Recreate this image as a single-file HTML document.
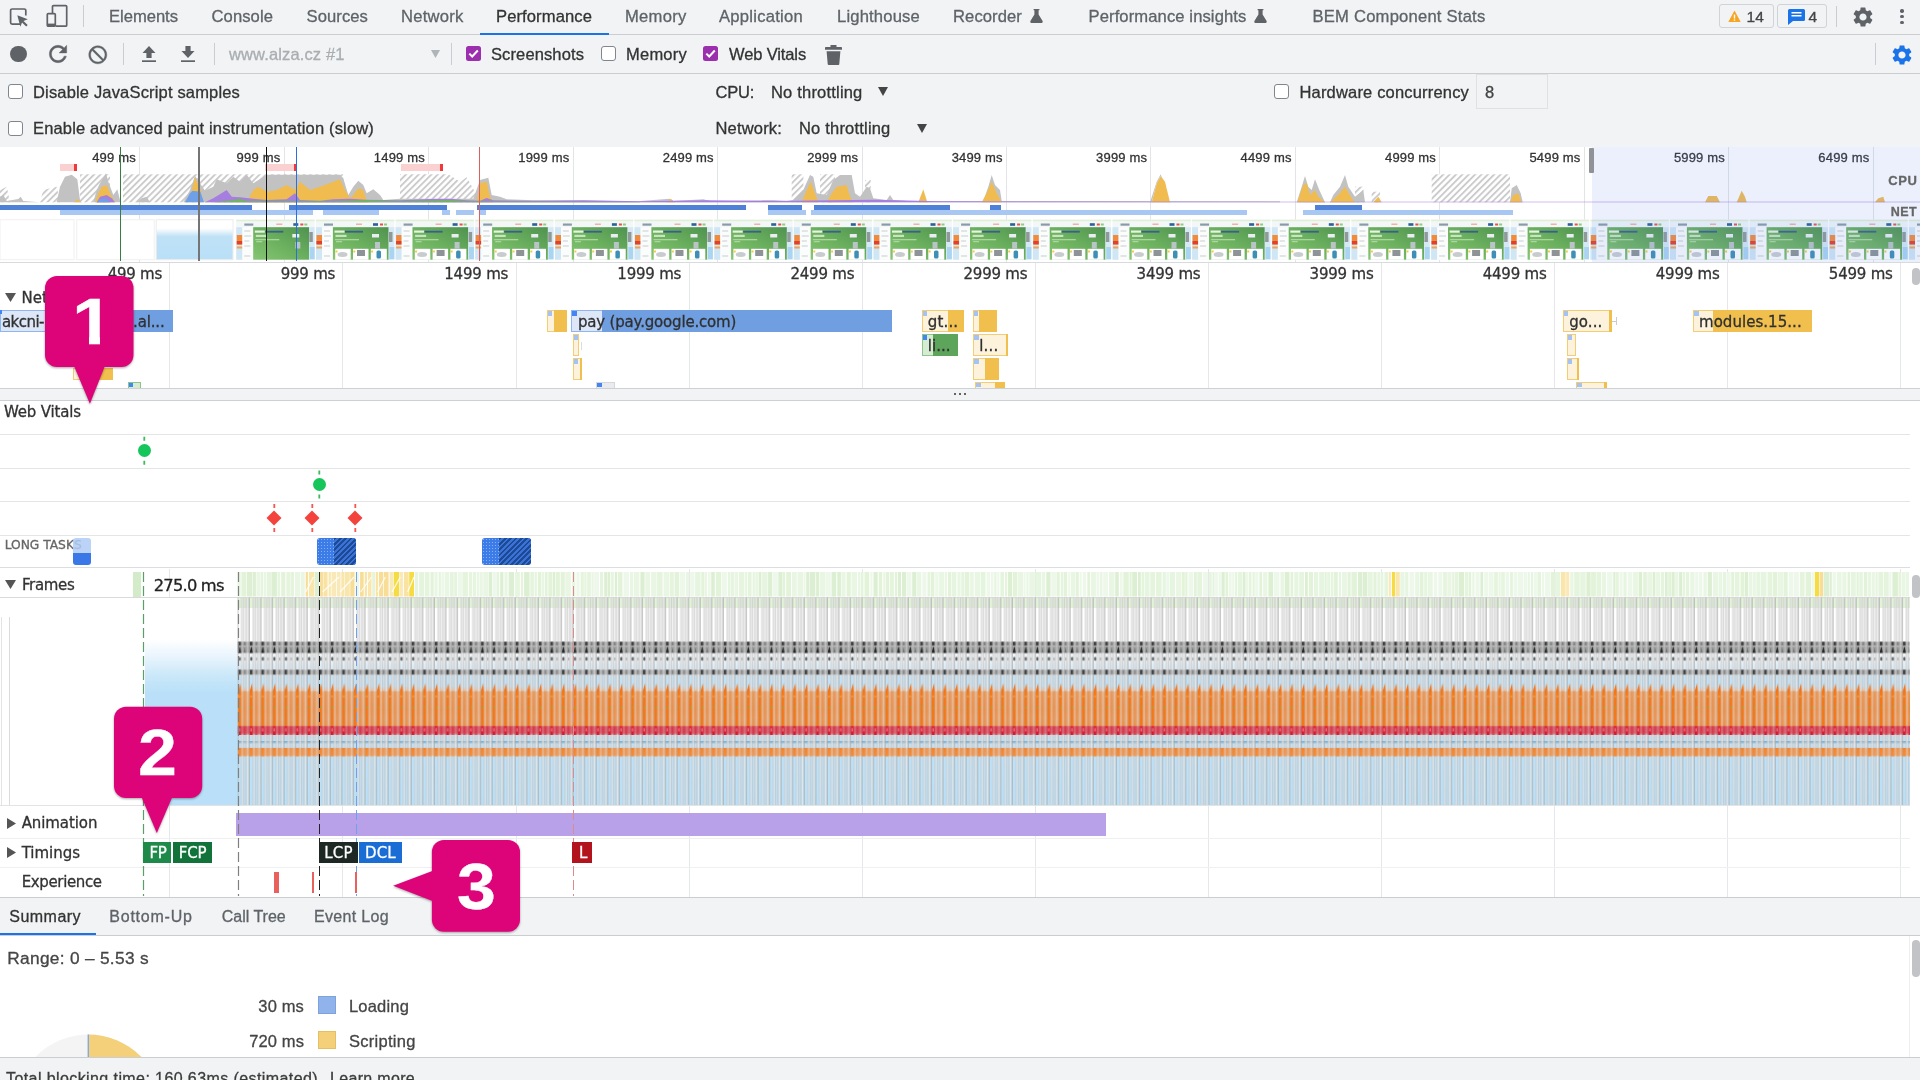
<!DOCTYPE html>
<html lang="en"><head><meta charset="utf-8"><title>DevTools Performance</title>
<style>
html,body{margin:0;padding:0}
body{width:1920px;height:1080px;position:relative;overflow:hidden;background:#fff;font-family:"Liberation Sans",sans-serif;}
.a{position:absolute;box-sizing:border-box}
.t{position:absolute;white-space:nowrap;display:block;-webkit-text-stroke:.3px}
svg{position:absolute;overflow:visible}
#w{position:absolute;left:0;top:0;width:1920px;height:1080px;will-change:transform}
</style></head><body><div id="w">

<div class="a" style="left:0.00px;top:0.00px;width:1920.00px;height:34.50px;background:#f1f3f4;"></div>
<div class="a" style="left:0.00px;top:34.00px;width:1920.00px;height:1.00px;background:#cbcdd1;"></div>
<svg style="left:9px;top:7px" width="20" height="20" viewBox="0 0 20 20"><path d="M11 17.2H3.2a1.6 1.6 0 0 1-1.6-1.6V3.6A1.6 1.6 0 0 1 3.2 2h12a1.6 1.6 0 0 1 1.6 1.6v5" fill="none" stroke="#5f6368" stroke-width="1.7"/><path d="M8.3 8.3l10.5 4-4.3 1.6 4.2 4.2-1.5 1.5-4.2-4.2-1.6 4.3z" fill="#5f6368"/></svg>
<svg style="left:46px;top:4px" width="23" height="24" viewBox="0 0 23 24"><path d="M6.5 9V2.6a1 1 0 0 1 1-1h12.2a1 1 0 0 1 1 1v18.6a1 1 0 0 1-1 1H10" fill="none" stroke="#5f6368" stroke-width="1.7"/><rect x="1.3" y="9.6" width="8" height="12.6" rx="1" fill="none" stroke="#5f6368" stroke-width="1.7"/><rect x="1.3" y="19.6" width="8" height="2.6" fill="#5f6368"/></svg>
<div class="a" style="left:83.00px;top:5.00px;width:1.00px;height:22.00px;background:#cbcdd1;"></div>
<span class="t" style="left:109.00px;top:8.80px;font-size:16.6px;line-height:16.6px;color:#5f6368;letter-spacing:-0.025px;">Elements</span>
<span class="t" style="left:211.50px;top:8.80px;font-size:16.6px;line-height:16.6px;color:#5f6368;letter-spacing:0.085px;">Console</span>
<span class="t" style="left:306.50px;top:8.80px;font-size:16.6px;line-height:16.6px;color:#5f6368;letter-spacing:0.086px;">Sources</span>
<span class="t" style="left:401.00px;top:8.80px;font-size:16.6px;line-height:16.6px;color:#5f6368;letter-spacing:0.231px;">Network</span>
<span class="t" style="left:496.00px;top:8.80px;font-size:16.6px;line-height:16.6px;color:#333;letter-spacing:0.088px;">Performance</span>
<span class="t" style="left:625.00px;top:8.80px;font-size:16.6px;line-height:16.6px;color:#5f6368;letter-spacing:0.258px;">Memory</span>
<span class="t" style="left:719.00px;top:8.80px;font-size:16.6px;line-height:16.6px;color:#5f6368;letter-spacing:0.253px;">Application</span>
<span class="t" style="left:837.00px;top:8.80px;font-size:16.6px;line-height:16.6px;color:#5f6368;letter-spacing:0.177px;">Lighthouse</span>
<span class="t" style="left:953.00px;top:8.80px;font-size:16.6px;line-height:16.6px;color:#5f6368;letter-spacing:0.091px;">Recorder</span>
<span class="t" style="left:1088.50px;top:8.80px;font-size:16.6px;line-height:16.6px;color:#5f6368;letter-spacing:0.104px;">Performance insights</span>
<span class="t" style="left:1312.50px;top:8.80px;font-size:16.6px;line-height:16.6px;color:#5f6368;letter-spacing:0.218px;">BEM Component Stats</span>
<div class="a" style="left:480.00px;top:33.30px;width:128.50px;height:1.70px;background:#1a73e8;"></div>
<svg style="left:1030px;top:9px" width="13" height="14" viewBox="0 0 13 14"><path d="M3.6 0h5.8v1.3H8.6v4.2l4 6.6c.4.8 0 1.9-1 1.9H1.400c-1 0-1.400-1.100-1-1.900l4-6.600V1.300H3.600z" fill="#5f6368"/></svg>
<svg style="left:1254px;top:9px" width="13" height="14" viewBox="0 0 13 14"><path d="M3.6 0h5.8v1.3H8.6v4.2l4 6.6c.4.8 0 1.9-1 1.9H1.400c-1 0-1.400-1.100-1-1.900l4-6.600V1.300H3.600z" fill="#5f6368"/></svg>
<div class="a" style="left:1719.00px;top:3.60px;width:55.00px;height:24.60px;background:#f1f3f4;border:1px solid #d0d3d7;border-radius:3px"></div>
<svg style="left:1728px;top:9.5px" width="13" height="13" viewBox="0 0 13 13"><path d="M6.500.6L12.700 12H.3z" fill="#f5a623"/><rect x="5.800" y="4.600" width="1.400" height="4" fill="#fff"/><rect x="5.800" y="9.400" width="1.400" height="1.400" fill="#fff"/></svg>
<span class="t" style="left:1746.50px;top:8.80px;font-size:15.5px;line-height:15.5px;color:#444;letter-spacing:0.129px;">14</span>
<div class="a" style="left:1777.00px;top:3.60px;width:50.00px;height:24.60px;background:#f1f3f4;border:1px solid #d0d3d7;border-radius:3px"></div>
<svg style="left:1787.500px;top:8.500px" width="17" height="16" viewBox="0 0 17 16"><path d="M1.500 0h14A1.500 1.500 0 0 1 17 1.500v9a1.500 1.500 0 0 1-1.500 1.500H5l-5 4V1.500A1.500 1.500 0 0 1 1.500 0z" fill="#1a73e8"/><rect x="3.500" y="3" width="10" height="1.500" fill="#fff"/><rect x="3.500" y="6" width="10" height="1.500" fill="#fff"/></svg>
<span class="t" style="left:1808.50px;top:8.80px;font-size:15.5px;line-height:15.5px;color:#444;letter-spacing:-0.121px;">4</span>
<div class="a" style="left:1836.00px;top:6.00px;width:1.00px;height:21.00px;background:#cbcdd1;"></div>
<svg style="left:1850.500px;top:4.500px" width="24" height="24" viewBox="0 0 24 24"><path d="M19.140 12.940c.040-.300.060-.610.060-.940 0-.320-.020-.640-.070-.940l2.030-1.580a.490.490 0 0 0 .120-.610l-1.920-3.320a.488.488 0 0 0-.590-.220l-2.390.960c-.500-.380-1.030-.700-1.620-.940l-.360-2.540a.484.484 0 0 0-.480-.410h-3.840c-.240 0-.430.170-.470.410l-.360 2.540c-.590.240-1.130.570-1.620.940l-2.390-.960c-.220-.080-.470 0-.590.220L2.740 8.870c-.120.210-.080.470.120.610l2.030 1.580c-.050.300-.090.630-.090.940s.020.640.070.940l-2.030 1.580a.490.490 0 0 0-.120.610l1.920 3.320c.120.220.370.290.590.220l2.390-.960c.500.380 1.030.700 1.620.940l.360 2.540c.050.240.240.410.480.410h3.840c.240 0 .440-.170.470-.410l.360-2.540c.590-.240 1.130-.560 1.620-.940l2.390.960c.220.080.470 0 .590-.220l1.920-3.320c.120-.220.070-.470-.120-.610l-2.010-1.580zM12 15.600c-1.980 0-3.600-1.620-3.600-3.600s1.620-3.600 3.600-3.600 3.600 1.620 3.600 3.600-1.620 3.600-3.600 3.600z" fill="#5f6368"/></svg>
<div class="a" style="left:1900.30px;top:9.30px;width:3.40px;height:3.40px;background:#5f6368;border-radius:50%"></div>
<div class="a" style="left:1900.30px;top:15.00px;width:3.40px;height:3.40px;background:#5f6368;border-radius:50%"></div>
<div class="a" style="left:1900.30px;top:20.70px;width:3.40px;height:3.40px;background:#5f6368;border-radius:50%"></div>
<div class="a" style="left:0.00px;top:35.00px;width:1920.00px;height:38.00px;background:#f1f3f4;"></div>
<div class="a" style="left:0.00px;top:73.00px;width:1920.00px;height:1.00px;background:#cbcdd1;"></div>
<div class="a" style="left:10.00px;top:45.70px;width:16.60px;height:16.60px;background:#5f6368;border-radius:50%"></div>
<svg style="left:44.500px;top:41.300px" width="26" height="26" viewBox="0 0 24 24"><path d="M17.650 6.350C16.200 4.900 14.210 4 12 4c-4.420 0-7.990 3.580-7.990 8s3.570 8 7.990 8c3.730 0 6.840-2.550 7.730-6h-2.080c-.820 2.330-3.040 4-5.650 4-3.310 0-6-2.690-6-6s2.690-6 6-6c1.660 0 3.140.690 4.220 1.780L13 11h7V4l-2.350 2.350z" fill="#5f6368" stroke="#5f6368" stroke-width=".4"/></svg>
<svg style="left:87.200px;top:43.700px" width="21.600" height="21.600" viewBox="0 0 24 24"><path transform="scale(-1,1) translate(-24,0)" d="M12 2C6.480 2 2 6.480 2 12s4.480 10 10 10 10-4.480 10-10S17.520 2 12 2zM4 12c0-4.420 3.580-8 8-8 1.850 0 3.550.630 4.900 1.690L5.690 16.900C4.630 15.550 4 13.850 4 12zm8 8c-1.850 0-3.550-.630-4.900-1.690L18.310 7.100C19.370 8.450 20 10.150 20 12c0 4.420-3.580 8-8 8z" fill="#5f6368" stroke="#5f6368" stroke-width=".5"/></svg>
<div class="a" style="left:123.00px;top:43.00px;width:1.00px;height:22.00px;background:#cbcdd1;"></div>
<svg style="left:142px;top:46px" width="14" height="16" viewBox="0 0 14 16"><path d="M7 0l6.500 7H9.600v5H4.400V7H.5z" fill="#5f6368"/><rect x="0" y="14.300" width="14" height="1.700" fill="#5f6368"/></svg>
<svg style="left:181px;top:46px" width="14" height="16" viewBox="0 0 14 16"><path d="M7 12L.5 5h3.900V0h5.200v5h3.900z" fill="#5f6368"/><rect x="0" y="14.300" width="14" height="1.700" fill="#5f6368"/></svg>
<div class="a" style="left:213.50px;top:43.00px;width:1.00px;height:22.00px;background:#cbcdd1;"></div>
<span class="t" style="left:229.00px;top:46.20px;font-size:16.5px;line-height:16.5px;color:#aaadb1;letter-spacing:0.128px;">www.alza.cz #1</span>
<svg style="left:431px;top:50px" width="9" height="8" viewBox="0 0 9 8"><path d="M0 0h9L4.500 8z" fill="#b0b3b7"/></svg>
<div class="a" style="left:451.00px;top:43.00px;width:1.00px;height:22.00px;background:#cbcdd1;"></div>
<div class="a" style="left:466.00px;top:46.00px;width:15.00px;height:15.00px;background:#9b2fae;border-radius:2.500px"></div><svg style="left:466px;top:46px" width="15" height="15" viewBox="0 0 15 15"><path d="M3.300 7.600l2.900 2.900 5.600-6" fill="none" stroke="#fff" stroke-width="2"/></svg>
<span class="t" style="left:491.00px;top:46.20px;font-size:16.5px;line-height:16.5px;color:#333;letter-spacing:0.116px;">Screenshots</span>
<div class="a" style="left:600.50px;top:46.00px;width:15.00px;height:15.00px;background:#fff;border:1.300px solid #80868b;border-radius:3px"></div>
<span class="t" style="left:626.00px;top:46.20px;font-size:16.5px;line-height:16.5px;color:#333;letter-spacing:0.235px;">Memory</span>
<div class="a" style="left:703.00px;top:46.00px;width:15.00px;height:15.00px;background:#9b2fae;border-radius:2.500px"></div><svg style="left:703px;top:46px" width="15" height="15" viewBox="0 0 15 15"><path d="M3.300 7.600l2.900 2.900 5.600-6" fill="none" stroke="#fff" stroke-width="2"/></svg>
<span class="t" style="left:729.00px;top:46.20px;font-size:16.5px;line-height:16.5px;color:#333;letter-spacing:-0.126px;">Web Vitals</span>
<svg style="left:824.500px;top:44.500px" width="17" height="20" viewBox="0 0 17 20"><path d="M5.500 0h6v2h4.700a.8.800 0 0 1 .8.800V4.800H0V2.800A.8.800 0 0 1 .8 2h4.700z" fill="#5f6368"/><path d="M1.600 6.200h13.800L14.300 19a1 1 0 0 1-1 1H3.700a1 1 0 0 1-1-1z" fill="#5f6368"/></svg>
<div class="a" style="left:1875.00px;top:43.00px;width:1.00px;height:22.00px;background:#cbcdd1;"></div>
<svg style="left:1889.500px;top:42.500px" width="24" height="24" viewBox="0 0 24 24"><path d="M19.140 12.940c.040-.300.060-.610.060-.940 0-.320-.020-.640-.070-.940l2.030-1.580a.490.490 0 0 0 .120-.610l-1.920-3.320a.488.488 0 0 0-.590-.220l-2.390.960c-.500-.380-1.030-.700-1.620-.940l-.360-2.540a.484.484 0 0 0-.480-.410h-3.840c-.240 0-.430.170-.470.410l-.360 2.540c-.590.240-1.130.570-1.620.940l-2.390-.960c-.220-.080-.470 0-.590.220L2.740 8.870c-.120.210-.080.470.120.610l2.030 1.580c-.050.300-.090.630-.090.940s.020.640.070.940l-2.030 1.580a.490.490 0 0 0-.120.610l1.920 3.320c.120.220.370.290.590.220l2.390-.960c.500.380 1.030.700 1.620.940l.360 2.540c.050.240.240.410.480.410h3.840c.240 0 .440-.170.470-.410l.360-2.540c.590-.240 1.130-.560 1.620-.940l2.390.960c.220.080.470 0 .590-.220l1.920-3.320c.120-.220.070-.470-.120-.610l-2.010-1.580zM12 15.600c-1.980 0-3.600-1.620-3.600-3.600s1.620-3.600 3.600-3.600 3.600 1.620 3.600 3.600-1.620 3.600-3.600 3.600z" fill="#1a73e8"/></svg>
<div class="a" style="left:0.00px;top:74.00px;width:1920.00px;height:73.00px;background:#f1f3f4;"></div>
<div class="a" style="left:7.50px;top:84.00px;width:15.00px;height:15.00px;background:#fff;border:1.300px solid #80868b;border-radius:3px"></div>
<span class="t" style="left:33.00px;top:84.20px;font-size:16.5px;line-height:16.5px;color:#333;letter-spacing:0.167px;">Disable JavaScript samples</span>
<div class="a" style="left:7.50px;top:120.50px;width:15.00px;height:15.00px;background:#fff;border:1.300px solid #80868b;border-radius:3px"></div>
<span class="t" style="left:33.00px;top:120.00px;font-size:16.5px;line-height:16.5px;color:#333;letter-spacing:0.162px;">Enable advanced paint instrumentation (slow)</span>
<span class="t" style="left:715.50px;top:84.20px;font-size:16.5px;line-height:16.5px;color:#333;letter-spacing:-0.231px;">CPU:</span>
<span class="t" style="left:771.00px;top:84.20px;font-size:16.5px;line-height:16.5px;color:#333;letter-spacing:0.195px;">No throttling</span>
<svg style="left:877.500px;top:87px" width="10" height="9" viewBox="0 0 10 9"><path d="M0 0h10L5 9z" fill="#444"/></svg>
<span class="t" style="left:715.50px;top:120.00px;font-size:16.5px;line-height:16.5px;color:#333;letter-spacing:0.175px;">Network:</span>
<span class="t" style="left:799.00px;top:120.00px;font-size:16.5px;line-height:16.5px;color:#333;letter-spacing:0.195px;">No throttling</span>
<svg style="left:917px;top:123.500px" width="10" height="9" viewBox="0 0 10 9"><path d="M0 0h10L5 9z" fill="#444"/></svg>
<div class="a" style="left:1273.50px;top:84.00px;width:15.00px;height:15.00px;background:#fff;border:1.300px solid #80868b;border-radius:3px"></div>
<span class="t" style="left:1299.50px;top:84.20px;font-size:16.5px;line-height:16.5px;color:#333;letter-spacing:0.176px;">Hardware concurrency</span>
<div class="a" style="left:1475.50px;top:74.00px;width:72.00px;height:35.00px;background:#f1f3f4;border:1px solid #dfe1e5"></div>
<span class="t" style="left:1485.00px;top:84.20px;font-size:16.5px;line-height:16.5px;color:#444;letter-spacing:-0.177px;">8</span>
<div class="a" style="left:0.00px;top:146.50px;width:1920.00px;height:1.00px;background:#cbcdd1;"></div>
<div class="a" style="left:0.00px;top:147.00px;width:1920.00px;height:115.00px;background:#fff;"></div>
<div class="a" style="left:139.30px;top:147.00px;width:1.00px;height:115.00px;background:#e3e4e6;"></div>
<div class="a" style="left:283.75px;top:147.00px;width:1.00px;height:115.00px;background:#e3e4e6;"></div>
<div class="a" style="left:428.20px;top:147.00px;width:1.00px;height:115.00px;background:#e3e4e6;"></div>
<div class="a" style="left:572.65px;top:147.00px;width:1.00px;height:115.00px;background:#e3e4e6;"></div>
<div class="a" style="left:717.10px;top:147.00px;width:1.00px;height:115.00px;background:#e3e4e6;"></div>
<div class="a" style="left:861.55px;top:147.00px;width:1.00px;height:115.00px;background:#e3e4e6;"></div>
<div class="a" style="left:1006.00px;top:147.00px;width:1.00px;height:115.00px;background:#e3e4e6;"></div>
<div class="a" style="left:1150.45px;top:147.00px;width:1.00px;height:115.00px;background:#e3e4e6;"></div>
<div class="a" style="left:1294.90px;top:147.00px;width:1.00px;height:115.00px;background:#e3e4e6;"></div>
<div class="a" style="left:1439.35px;top:147.00px;width:1.00px;height:115.00px;background:#e3e4e6;"></div>
<div class="a" style="left:1583.80px;top:147.00px;width:1.00px;height:115.00px;background:#e3e4e6;"></div>
<div class="a" style="left:1728.25px;top:147.00px;width:1.00px;height:115.00px;background:#e3e4e6;"></div>
<div class="a" style="left:1872.70px;top:147.00px;width:1.00px;height:115.00px;background:#e3e4e6;"></div>
<svg style="left:0;top:0" width="1920" height="270" viewBox="0 0 1920 270"><defs><pattern id="hat" width="4.500" height="4.500" patternUnits="userSpaceOnUse" patternTransform="rotate(45)"><rect width="4.500" height="4.500" fill="#fff"/><rect width="1.900" height="4.500" fill="#cbcbcb"/></pattern></defs><polygon points="0.0,202.3 0.0,190.0 6.7,186.7 10.0,202.3" fill="url(#hat)"/><polygon points="40.0,202.3 43.3,190.0 56.7,186.7 60.0,202.3" fill="url(#hat)"/><rect x="80.0" y="174.3" width="30.0" height="28.0" fill="url(#hat)"/><rect x="123.0" y="174.3" width="220.3" height="28.0" fill="url(#hat)"/><polygon points="400.0,202.3 400.0,174.3 448.3,174.3 460.0,181.7 466.7,177.3 476.7,195.0 476.7,202.3" fill="url(#hat)"/><rect x="791.7" y="174.3" width="11.7" height="28.0" fill="url(#hat)"/><rect x="820.0" y="174.3" width="15.0" height="28.0" fill="url(#hat)"/><rect x="865.0" y="180.0" width="5.7" height="22.3" fill="url(#hat)"/><rect x="1355.0" y="186.7" width="8.3" height="15.7" fill="url(#hat)"/><rect x="1371.7" y="191.7" width="8.3" height="10.7" fill="url(#hat)"/><rect x="1431.7" y="174.3" width="78.3" height="28.0" fill="url(#hat)"/><polygon points="0.0,202.3 0.0,196.7 3.3,195.0 6.7,201.0 18.3,199.0 20.7,196.7 23.3,201.0 33.3,201.7 40.0,202.3" fill="#c2c2c2"/><polygon points="56.7,202.3 60.0,186.7 65.0,176.7 71.7,174.7 77.3,179.3 80.0,200.0 81.7,202.3" fill="#c2c2c2"/><polygon points="93.3,202.3 96.7,190.0 100.0,183.3 106.0,173.3 108.3,181.7 113.3,195.0 117.3,189.3 120.0,200.0 121.7,202.3" fill="#c2c2c2"/><polygon points="136.7,202.3 141.7,198.3 146.7,196.7 150.0,202.3" fill="#c2c2c2"/><polygon points="183.3,202.3 190.0,190.0 195.0,176.0 199.0,181.7 205.0,190.7 213.3,186.7 216.7,179.3 226.7,183.3 233.3,176.7 240.0,181.7 246.7,174.7 253.3,183.3 266.7,174.7 340.0,174.7 343.3,178.3 348.3,195.0 353.3,186.7 358.3,180.7 363.3,185.0 366.7,193.3 373.3,189.3 380.0,195.0 383.3,200.0 400.0,198.7 433.3,198.7 473.3,198.7 480.0,180.0 488.3,177.7 491.7,195.0 500.0,196.7 506.7,199.3 533.3,200.3 640.0,201.3 640.0,202.3" fill="#c2c2c2"/><polygon points="95.0,202.3 98.3,193.3 101.7,186.7 106.7,185.0 110.0,193.3 115.0,202.3" fill="#f0bc4f"/><polygon points="74.0,202.3 77.3,199.3 80.7,202.3" fill="#f0bc4f"/><polygon points="185.0,202.3 190.0,193.3 193.3,190.0 200.0,190.7 204.0,202.3" fill="#6f9fe6"/><polygon points="191.7,190.7 195.0,177.3 199.0,186.7 201.7,191.7" fill="#f0bc4f"/><polygon points="96.7,202.3 100.0,196.7 106.7,195.0 111.7,198.3 115.0,202.3" fill="#a57ee0"/><polygon points="96.7,202.3 100.0,199.3 106.0,198.3 110.0,202.3" fill="#6f9fe6"/><polygon points="246.7,202.3 253.3,190.0 258.3,186.7 266.7,191.7 276.7,190.0 286.7,185.0 295.0,190.0 300.0,181.7 310.0,190.0 320.0,186.7 333.3,181.7 340.0,179.3 345.0,190.0 350.0,198.3 353.3,195.0 358.3,188.3 363.3,190.0 366.7,200.0 368.3,202.3" fill="#f0bc4f"/><polygon points="476.7,202.3 480.0,183.3 486.7,181.7 490.0,196.7 493.3,202.3" fill="#f0bc4f"/><polygon points="205.0,202.3 213.3,198.3 226.7,190.0 231.7,196.7 240.0,197.3 253.3,198.7 266.7,200.0 286.7,199.3 295.0,193.3 300.0,200.0 320.0,200.7 333.3,199.3 350.0,198.7 366.7,199.7 400.0,200.3 430.0,199.0 450.0,198.7 466.7,200.3 480.0,200.7 486.7,198.0 493.3,200.3 533.3,200.7 583.3,200.3 640.0,201.3 640.0,202.3" fill="#a57ee0"/><polygon points="213.3,202.3 233.3,200.0 240.0,198.7 246.7,201.0 333.3,201.3 366.7,200.0 400.0,201.3 450.0,200.0 466.7,201.3 640.0,202.0 640.0,202.3" fill="#74b266"/><polygon points="640.0,202.3 640.0,201.0 670.0,198.7 673.3,201.0 703.3,199.3 710.0,201.0 773.3,200.0 786.7,201.0 793.3,200.0 803.3,190.0 810.0,175.0 813.3,176.7 816.7,193.3 826.7,195.0 833.3,180.0 840.0,175.0 851.7,175.0 855.0,193.3 860.0,196.7 866.7,186.7 870.0,188.3 873.3,198.3 886.7,200.0 890.0,195.0 893.3,200.0 906.7,201.0 983.3,201.0 988.3,186.7 991.7,175.0 995.0,185.0 1000.0,190.0 1001.7,201.0 1280.0,201.3 1280.0,202.3" fill="#c2c2c2"/><polygon points="801.7,202.3 806.7,190.0 810.7,181.7 815.0,193.3 818.3,202.3" fill="#f0bc4f"/><polygon points="826.7,202.3 831.7,193.3 836.7,186.7 846.7,185.0 850.0,196.7 853.3,202.3" fill="#f0bc4f"/><polygon points="918.3,202.3 923.3,189.3 927.3,202.3" fill="#f0bc4f"/><polygon points="981.7,202.3 986.7,193.3 991.7,181.7 996.7,193.3 1001.7,202.3" fill="#f0bc4f"/><polygon points="1151.7,202.3 1156.7,183.3 1160.7,176.0 1165.0,181.7 1170.0,202.3" fill="#f0bc4f"/><polygon points="1150.0,202.3 1156.7,181.7 1160.7,174.3 1162.7,180.0 1160.7,176.0 1156.7,183.3 1151.7,202.3" fill="#c2c2c2"/><polygon points="666.7,202.3 670.7,198.7 675.0,202.3" fill="#f0bc4f"/><polygon points="640.0,202.3 640.0,201.3 706.7,200.3 773.3,201.0 873.3,199.7 940.0,201.3 1280.0,201.7 1280.0,202.3" fill="#a57ee0"/><polygon points="1296.7,202.3 1301.7,186.7 1305.0,176.0 1308.3,186.7 1311.7,190.0 1315.0,179.3 1319.3,190.0 1325.0,202.3" fill="#c2c2c2"/><polygon points="1297.3,202.3 1303.3,185.0 1306.7,183.3 1310.0,195.0 1315.0,190.0 1318.3,196.7 1325.0,202.3" fill="#f0bc4f"/><polygon points="1330.0,202.3 1333.3,195.0 1340.0,186.7 1345.0,175.0 1348.3,186.7 1355.0,196.7 1363.3,190.0 1365.0,202.3" fill="#c2c2c2"/><polygon points="1330.0,202.3 1338.3,195.0 1345.0,186.7 1351.7,198.3 1355.0,202.3" fill="#f0bc4f"/><polygon points="1373.3,202.3 1378.3,196.7 1381.7,202.3" fill="#f0bc4f"/><polygon points="1510.0,202.3 1511.7,188.3 1516.7,185.0 1520.7,193.3 1522.7,202.3" fill="#c2c2c2"/><polygon points="1510.0,202.3 1513.3,195.0 1518.3,193.3 1521.7,202.3" fill="#f0bc4f"/><polygon points="1705.0,202.3 1708.3,196.0 1716.7,196.0 1720.0,202.3" fill="#f0bc4f"/><polygon points="1736.7,202.3 1741.7,190.7 1745.0,196.7 1746.7,202.3" fill="#f0bc4f"/><polygon points="1875.0,202.3 1878.3,198.3 1883.3,196.7 1885.0,202.3" fill="#f0bc4f"/><polygon points="1280.0,202.3 1280.0,201.7 1920.0,201.7 1920.0,202.3" fill="#a57ee0"/></svg>
<div class="a" style="left:60.00px;top:164.30px;width:17.30px;height:6.50px;background:#fbd0d0;"></div>
<div class="a" style="left:74.30px;top:164.30px;width:3.00px;height:6.50px;background:#f03a3a;"></div>
<div class="a" style="left:265.00px;top:164.30px;width:31.70px;height:6.50px;background:#fbd0d0;"></div>
<div class="a" style="left:293.70px;top:164.30px;width:3.00px;height:6.50px;background:#f03a3a;"></div>
<div class="a" style="left:401.00px;top:164.30px;width:42.30px;height:6.50px;background:#fbd0d0;"></div>
<div class="a" style="left:440.30px;top:164.30px;width:3.00px;height:6.50px;background:#f03a3a;"></div>
<div class="a" style="left:0.00px;top:205.00px;width:251.70px;height:4.50px;background:#4f82d6;"></div>
<div class="a" style="left:289.30px;top:205.00px;width:157.40px;height:4.50px;background:#4f82d6;"></div>
<div class="a" style="left:476.70px;top:205.00px;width:269.30px;height:4.50px;background:#4f82d6;"></div>
<div class="a" style="left:768.30px;top:205.00px;width:33.40px;height:4.50px;background:#4f82d6;"></div>
<div class="a" style="left:814.00px;top:205.00px;width:136.00px;height:4.50px;background:#4f82d6;"></div>
<div class="a" style="left:990.00px;top:205.00px;width:10.70px;height:4.50px;background:#4f82d6;"></div>
<div class="a" style="left:1315.00px;top:205.00px;width:46.70px;height:4.50px;background:#4f82d6;"></div>
<div class="a" style="left:60.00px;top:210.30px;width:253.30px;height:5.00px;background:#a9c7f3;"></div>
<div class="a" style="left:322.70px;top:210.30px;width:56.30px;height:5.00px;background:#a9c7f3;"></div>
<div class="a" style="left:442.30px;top:210.30px;width:7.70px;height:5.00px;background:#a9c7f3;"></div>
<div class="a" style="left:456.00px;top:210.30px;width:18.00px;height:5.00px;background:#a9c7f3;"></div>
<div class="a" style="left:480.00px;top:210.30px;width:6.00px;height:5.00px;background:#a9c7f3;"></div>
<div class="a" style="left:767.70px;top:210.30px;width:38.00px;height:5.00px;background:#a9c7f3;"></div>
<div class="a" style="left:811.00px;top:210.30px;width:435.70px;height:5.00px;background:#a9c7f3;"></div>
<div class="a" style="left:1303.30px;top:210.30px;width:210.00px;height:5.00px;background:#a9c7f3;"></div>
<svg style="left:0;top:0" width="1920" height="270" viewBox="0 0 1920 270"><defs><linearGradient id="gg" x1="0" y1="1" x2="1" y2="0"><stop offset="0" stop-color="#86c573"/><stop offset=".5" stop-color="#6bb05e"/><stop offset="1" stop-color="#4f9250"/></linearGradient><g id="th"><rect x="0" y="219.700" width="78.300" height="40" fill="#f3f7f8"/><rect x="0" y="219.700" width="78.300" height="1.500" fill="#dff0d3"/><rect x="0" y="227.200" width="6.100" height="32.500" fill="#cfe6f5"/><rect x="0.500" y="235" width="5.600" height="10" fill="#f08a3c"/><rect x="0.500" y="241" width="5.600" height="3" fill="#e0402f"/><rect x="0.500" y="246.500" width="5.600" height="2" fill="#f4a05a"/><rect x="6.100" y="227.200" width="10.800" height="32.500" fill="#fbfcfc"/><path d="M8 231h6M8 236h7M8 241h5M8 246h6M8 256h6" stroke="#c9cdd0" stroke-width="1"/><rect x="16.900" y="227.200" width="55.800" height="32.500" fill="url(#gg)"/><rect x="8" y="223.500" width="9" height="2.200" fill="#8a9aa8"/><rect x="57" y="223.200" width="5" height="2.600" fill="#2f5f9a"/><rect x="40" y="223.500" width="6" height="1.500" fill="#f2b0a8"/><rect x="64" y="223.500" width="3" height="2" fill="#e8504a"/><rect x="68" y="223.500" width="3" height="2" fill="#8fca7e"/><rect x="18.500" y="230.500" width="10" height="2.200" fill="#e6f2e2"/><rect x="29" y="230.800" width="18" height="1.800" fill="#3a5f8c"/><rect x="19.500" y="234.800" width="11" height="2.200" fill="#c9e5c0"/><rect x="19" y="239" width="24" height="1.300" fill="#a9d69c"/><rect x="20" y="241" width="6" height="1.300" fill="#a9d69c"/><rect x="56" y="234" width="7" height="3.500" fill="#e9eef0"/><rect x="59" y="242" width="5" height="6.500" fill="#b9c4c6"/><rect x="72.700" y="227.200" width="5.600" height="32.500" fill="#d6e9f4"/><rect x="73" y="232" width="3.500" height="10" fill="#8f9a98"/><rect x="73.500" y="247" width="4.800" height="12" fill="#a9d4f2"/></g><g id="pb"><rect x="19.200" y="248.800" width="15.500" height="11" fill="#fff"/><rect x="37" y="248.800" width="15.500" height="11" fill="#fff"/><rect x="54.800" y="248.800" width="16" height="11" fill="#fff"/><ellipse cx="26.500" cy="254.500" rx="5" ry="2.500" fill="#c9cccf"/><rect x="41" y="250" width="8" height="6" fill="#8d9396"/><rect x="60.500" y="250.500" width="4.500" height="8" rx="1.500" fill="#3d8fb5"/><rect x="19.500" y="250.500" width="2" height="2" fill="#f6c945"/><rect x="37.300" y="250.500" width="2" height="2" fill="#f6c945"/><rect x="55.100" y="250.500" width="2" height="2" fill="#f6c945"/></g></defs><rect x="0" y="219.700" width="74" height="40" fill="#fff" stroke="#f0f0f0" stroke-width="1"/><rect x="76.700" y="219.700" width="77.500" height="40" fill="#fff" stroke="#f0f0f0" stroke-width="1"/><defs><linearGradient id="bg1" x1="0" y1="0" x2="0" y2="1"><stop offset="0" stop-color="#fff"/><stop offset=".22" stop-color="#fff"/><stop offset=".42" stop-color="#bfe1f6"/><stop offset="1" stop-color="#b9e0f8"/></linearGradient></defs><rect x="156.200" y="219.700" width="76.800" height="40" fill="url(#bg1)" stroke="#ececec" stroke-width="1"/><use href="#th" x="236.3"/><use href="#th" x="316.0"/><use href="#pb" x="316.0"/><use href="#th" x="395.6"/><use href="#pb" x="395.6"/><use href="#th" x="475.2"/><use href="#pb" x="475.2"/><use href="#th" x="554.9"/><use href="#pb" x="554.9"/><use href="#th" x="634.5"/><use href="#pb" x="634.5"/><use href="#th" x="714.2"/><use href="#pb" x="714.2"/><use href="#th" x="793.8"/><use href="#pb" x="793.8"/><use href="#th" x="873.5"/><use href="#pb" x="873.5"/><use href="#th" x="953.1"/><use href="#pb" x="953.1"/><use href="#th" x="1032.8"/><use href="#pb" x="1032.8"/><use href="#th" x="1112.5"/><use href="#pb" x="1112.5"/><use href="#th" x="1192.1"/><use href="#pb" x="1192.1"/><use href="#th" x="1271.8"/><use href="#pb" x="1271.8"/><use href="#th" x="1351.4"/><use href="#pb" x="1351.4"/><use href="#th" x="1431.1"/><use href="#pb" x="1431.1"/><use href="#th" x="1510.7"/><use href="#pb" x="1510.7"/><use href="#th" x="1590.4"/><use href="#pb" x="1590.4"/><use href="#th" x="1670.0"/><use href="#pb" x="1670.0"/><use href="#th" x="1749.7"/><use href="#pb" x="1749.7"/><use href="#th" x="1829.3"/><use href="#pb" x="1829.3"/><use href="#th" x="1909.0"/><use href="#pb" x="1909.0"/></svg>
<div class="a" style="left:0.00px;top:261.50px;width:1920.00px;height:1.00px;background:#d8dadd;"></div>
<span class="t" style="left:92.17px;top:150.50px;font-size:13px;line-height:13px;color:#333;letter-spacing:0.200px;">499 ms</span>
<span class="t" style="left:236.62px;top:150.50px;font-size:13px;line-height:13px;color:#333;letter-spacing:0.200px;">999 ms</span>
<span class="t" style="left:373.84px;top:150.50px;font-size:13px;line-height:13px;color:#333;letter-spacing:0.171px;">1499 ms</span>
<span class="t" style="left:518.29px;top:150.50px;font-size:13px;line-height:13px;color:#333;letter-spacing:0.171px;">1999 ms</span>
<span class="t" style="left:662.74px;top:150.50px;font-size:13px;line-height:13px;color:#333;letter-spacing:0.171px;">2499 ms</span>
<span class="t" style="left:807.19px;top:150.50px;font-size:13px;line-height:13px;color:#333;letter-spacing:0.171px;">2999 ms</span>
<span class="t" style="left:951.64px;top:150.50px;font-size:13px;line-height:13px;color:#333;letter-spacing:0.171px;">3499 ms</span>
<span class="t" style="left:1096.09px;top:150.50px;font-size:13px;line-height:13px;color:#333;letter-spacing:0.171px;">3999 ms</span>
<span class="t" style="left:1240.54px;top:150.50px;font-size:13px;line-height:13px;color:#333;letter-spacing:0.171px;">4499 ms</span>
<span class="t" style="left:1384.99px;top:150.50px;font-size:13px;line-height:13px;color:#333;letter-spacing:0.171px;">4999 ms</span>
<span class="t" style="left:1529.44px;top:150.50px;font-size:13px;line-height:13px;color:#333;letter-spacing:0.171px;">5499 ms</span>
<span class="t" style="left:1673.89px;top:150.50px;font-size:13px;line-height:13px;color:#333;letter-spacing:0.171px;">5999 ms</span>
<span class="t" style="left:1818.34px;top:150.50px;font-size:13px;line-height:13px;color:#333;letter-spacing:0.171px;">6499 ms</span>
<div class="a" style="left:119.60px;top:147.00px;width:1.50px;height:114.00px;background:#3a7d44;"></div>
<div class="a" style="left:198.30px;top:147.00px;width:1.30px;height:114.00px;background:#757575;"></div>
<div class="a" style="left:266.00px;top:147.00px;width:1.00px;height:114.00px;background:#111;"></div>
<div class="a" style="left:296.20px;top:147.00px;width:1.00px;height:114.00px;background:#2a6fdb;"></div>
<div class="a" style="left:478.70px;top:147.00px;width:1.00px;height:114.00px;background:#d9605c;"></div>
<div class="a" style="left:1591.70px;top:147.00px;width:328.30px;height:115.00px;background:rgba(100,140,230,0.13);"></div>
<div class="a" style="left:1589.30px;top:148.30px;width:4.70px;height:24.50px;background:#8f9296;border-radius:1px"></div>
<span class="t" style="left:1888.30px;top:174.00px;font-size:13px;line-height:13px;color:#666;letter-spacing:0.517px;font-family:'Liberation Sans',sans-serif;font-weight:700;">CPU</span>
<span class="t" style="left:1890.70px;top:206.00px;font-size:12.5px;line-height:12.5px;color:#666;letter-spacing:0.533px;font-family:'Liberation Sans',sans-serif;font-weight:700;">NET</span>
<div class="a" style="left:169.40px;top:263.00px;width:1.00px;height:634.00px;background:#e6e7e9;"></div>
<div class="a" style="left:342.47px;top:263.00px;width:1.00px;height:634.00px;background:#e6e7e9;"></div>
<div class="a" style="left:515.54px;top:263.00px;width:1.00px;height:634.00px;background:#e6e7e9;"></div>
<div class="a" style="left:688.61px;top:263.00px;width:1.00px;height:634.00px;background:#e6e7e9;"></div>
<div class="a" style="left:861.68px;top:263.00px;width:1.00px;height:634.00px;background:#e6e7e9;"></div>
<div class="a" style="left:1034.75px;top:263.00px;width:1.00px;height:634.00px;background:#e6e7e9;"></div>
<div class="a" style="left:1207.82px;top:263.00px;width:1.00px;height:634.00px;background:#e6e7e9;"></div>
<div class="a" style="left:1380.89px;top:263.00px;width:1.00px;height:634.00px;background:#e6e7e9;"></div>
<div class="a" style="left:1553.96px;top:263.00px;width:1.00px;height:634.00px;background:#e6e7e9;"></div>
<div class="a" style="left:1727.03px;top:263.00px;width:1.00px;height:634.00px;background:#e6e7e9;"></div>
<div class="a" style="left:1900.10px;top:263.00px;width:1.00px;height:634.00px;background:#e6e7e9;"></div>
<span class="t" style="left:107.67px;top:267.00px;font-size:15px;line-height:15px;color:#333;letter-spacing:-0.250px;font-family:'DejaVu Sans',sans-serif;">499 ms</span>
<span class="t" style="left:280.74px;top:267.00px;font-size:15px;line-height:15px;color:#333;letter-spacing:-0.250px;font-family:'DejaVu Sans',sans-serif;">999 ms</span>
<span class="t" style="left:444.27px;top:267.00px;font-size:15px;line-height:15px;color:#333;letter-spacing:-0.214px;font-family:'DejaVu Sans',sans-serif;">1499 ms</span>
<span class="t" style="left:617.34px;top:267.00px;font-size:15px;line-height:15px;color:#333;letter-spacing:-0.214px;font-family:'DejaVu Sans',sans-serif;">1999 ms</span>
<span class="t" style="left:790.41px;top:267.00px;font-size:15px;line-height:15px;color:#333;letter-spacing:-0.214px;font-family:'DejaVu Sans',sans-serif;">2499 ms</span>
<span class="t" style="left:963.48px;top:267.00px;font-size:15px;line-height:15px;color:#333;letter-spacing:-0.214px;font-family:'DejaVu Sans',sans-serif;">2999 ms</span>
<span class="t" style="left:1136.55px;top:267.00px;font-size:15px;line-height:15px;color:#333;letter-spacing:-0.214px;font-family:'DejaVu Sans',sans-serif;">3499 ms</span>
<span class="t" style="left:1309.62px;top:267.00px;font-size:15px;line-height:15px;color:#333;letter-spacing:-0.214px;font-family:'DejaVu Sans',sans-serif;">3999 ms</span>
<span class="t" style="left:1482.69px;top:267.00px;font-size:15px;line-height:15px;color:#333;letter-spacing:-0.214px;font-family:'DejaVu Sans',sans-serif;">4499 ms</span>
<span class="t" style="left:1655.76px;top:267.00px;font-size:15px;line-height:15px;color:#333;letter-spacing:-0.214px;font-family:'DejaVu Sans',sans-serif;">4999 ms</span>
<span class="t" style="left:1828.83px;top:267.00px;font-size:15px;line-height:15px;color:#333;letter-spacing:-0.214px;font-family:'DejaVu Sans',sans-serif;">5499 ms</span>
<div class="a" style="left:1909.50px;top:263.00px;width:10.50px;height:634.00px;background:#fff;"></div>
<div class="a" style="left:1911.70px;top:268.00px;width:8.30px;height:17.00px;background:#c1c3c6;border-radius:4px"></div>
<div class="a" style="left:1911.70px;top:574.50px;width:8.30px;height:23.00px;background:#c1c3c6;border-radius:4px"></div>
<svg style="left:4.5px;top:293.3px" width="11" height="9" viewBox="0 0 11 9"><path d="M0 0h11L5.500 9z" fill="#555"/></svg>
<span class="t" style="left:21.60px;top:290.80px;font-size:15px;line-height:15px;color:#333;letter-spacing:0.000px;font-family:'DejaVu Sans',sans-serif;">Network</span>
<div class="a" style="left:0.00px;top:310.20px;width:172.50px;height:22.20px;background:#6f9fe0;"></div><div class="a" style="left:0.00px;top:310.20px;width:45.00px;height:22.20px;background:#dde7f8;border:1px solid #8db5ee;border-right:none"></div><span class="t" style="left:1.90px;top:314.80px;font-size:15px;line-height:15px;color:#303030;letter-spacing:-0.519px;font-family:'DejaVu Sans',sans-serif;">akcni-</span>
<span class="t" style="left:133.00px;top:314.80px;font-size:15px;line-height:15px;color:#303030;letter-spacing:-0.139px;font-family:'DejaVu Sans',sans-serif;">.al...</span>
<div class="a" style="left:0.00px;top:310.20px;width:1.50px;height:3.50px;background:#4285f4;"></div>
<div class="a" style="left:73.00px;top:367.50px;width:40.40px;height:12.00px;background:#f0bf4d;"></div><div class="a" style="left:73.00px;top:367.50px;width:22.00px;height:12.00px;background:#fdf3dc;border:1px solid #f4cd72;border-right:none"></div>
<div class="a" style="left:127.50px;top:381.50px;width:13.10px;height:7.00px;background:#5ea55c;"></div><div class="a" style="left:127.50px;top:381.50px;width:13.10px;height:7.00px;background:#d6ecd2;border:1px solid #8cc58a"></div><div class="a" style="left:128.50px;top:382.50px;width:4.50px;height:4.50px;background:#4285f4;"></div>
<div class="a" style="left:546.90px;top:310.20px;width:20.00px;height:22.20px;background:#f0bf4d;"></div><div class="a" style="left:546.90px;top:310.20px;width:7.50px;height:22.20px;background:#fdf3dc;border:1px solid #f4cd72;border-right:none"></div><div class="a" style="left:547.90px;top:311.20px;width:4.50px;height:4.50px;background:#a4c2f4;"></div>
<div class="a" style="left:571.25px;top:310.20px;width:321.05px;height:22.20px;background:#6f9fe0;"></div><div class="a" style="left:571.25px;top:310.20px;width:30.75px;height:22.20px;background:#dde7f8;border:1px solid #8db5ee;border-right:none"></div><div class="a" style="left:572.25px;top:311.20px;width:4.50px;height:4.50px;background:#4285f4;"></div><span class="t" style="left:577.90px;top:314.80px;font-size:15px;line-height:15px;color:#303030;letter-spacing:-0.177px;font-family:'DejaVu Sans',sans-serif;">pay (pay.google.com)</span>
<div class="a" style="left:572.50px;top:334.30px;width:6.25px;height:22.00px;background:#f0bf4d;"></div><div class="a" style="left:572.50px;top:334.30px;width:6.25px;height:22.00px;background:#fdf3dc;border:1px solid #f4cd72"></div><div class="a" style="left:573.50px;top:335.30px;width:4.50px;height:4.50px;background:#a4c2f4;"></div>
<div class="a" style="left:581.00px;top:342.00px;width:1.00px;height:8.00px;background:#ddd;"></div>
<div class="a" style="left:572.50px;top:358.00px;width:9.40px;height:22.00px;background:#f0bf4d;"></div><div class="a" style="left:572.50px;top:358.00px;width:7.50px;height:22.00px;background:#fdf3dc;border:1px solid #f4cd72;border-right:none"></div><div class="a" style="left:573.50px;top:359.00px;width:4.50px;height:4.50px;background:#a4c2f4;"></div>
<div class="a" style="left:596.25px;top:381.50px;width:18.75px;height:7.00px;background:#e9ebee;"></div><div class="a" style="left:596.25px;top:381.50px;width:18.75px;height:7.00px;background:#e9ebee;border:1px solid #d5d7da"></div><div class="a" style="left:597.25px;top:382.50px;width:4.50px;height:4.50px;background:#4285f4;"></div>
<div class="a" style="left:921.70px;top:310.20px;width:42.30px;height:22.20px;background:#f0bf4d;"></div><div class="a" style="left:921.70px;top:310.20px;width:26.60px;height:22.20px;background:#fdf3dc;border:1px solid #f4cd72;border-right:none"></div><div class="a" style="left:922.70px;top:311.20px;width:4.50px;height:4.50px;background:#a4c2f4;"></div><span class="t" style="left:927.70px;top:314.80px;font-size:15px;line-height:15px;color:#303030;letter-spacing:0.178px;font-family:'DejaVu Sans',sans-serif;">gt...</span>
<div class="a" style="left:972.70px;top:310.20px;width:24.60px;height:22.20px;background:#f0bf4d;"></div><div class="a" style="left:972.70px;top:310.20px;width:6.30px;height:22.20px;background:#fdf3dc;border:1px solid #f4cd72;border-right:none"></div><div class="a" style="left:973.70px;top:311.20px;width:4.50px;height:4.50px;background:#a4c2f4;"></div>
<div class="a" style="left:921.70px;top:334.30px;width:36.60px;height:22.00px;background:#5ea55c;"></div><div class="a" style="left:921.70px;top:334.30px;width:11.60px;height:22.00px;background:#d6ecd2;border:1px solid #8cc58a;border-right:none"></div><div class="a" style="left:922.70px;top:335.30px;width:4.50px;height:4.50px;background:#4285f4;"></div><span class="t" style="left:927.70px;top:338.90px;font-size:15px;line-height:15px;color:#303030;letter-spacing:0.072px;font-family:'DejaVu Sans',sans-serif;">li...</span>
<div class="a" style="left:973.30px;top:334.30px;width:35.00px;height:22.00px;background:#f0bf4d;"></div><div class="a" style="left:973.30px;top:334.30px;width:33.00px;height:22.00px;background:#fdf3dc;border:1px solid #f4cd72;border-right:none"></div><div class="a" style="left:974.30px;top:335.30px;width:4.50px;height:4.50px;background:#a4c2f4;"></div><span class="t" style="left:979.30px;top:338.90px;font-size:15px;line-height:15px;color:#303030;letter-spacing:0.132px;font-family:'DejaVu Sans',sans-serif;">l...</span>
<div class="a" style="left:973.30px;top:358.00px;width:25.70px;height:22.00px;background:#f0bf4d;"></div><div class="a" style="left:973.30px;top:358.00px;width:11.70px;height:22.00px;background:#fdf3dc;border:1px solid #f4cd72;border-right:none"></div><div class="a" style="left:974.30px;top:359.00px;width:4.50px;height:4.50px;background:#a4c2f4;"></div>
<div class="a" style="left:975.00px;top:381.50px;width:30.00px;height:7.00px;background:#f0bf4d;"></div><div class="a" style="left:975.00px;top:381.50px;width:20.00px;height:7.00px;background:#fdf3dc;border:1px solid #f4cd72;border-right:none"></div><div class="a" style="left:976.00px;top:382.50px;width:4.50px;height:4.50px;background:#a4c2f4;"></div>
<div class="a" style="left:1562.70px;top:310.20px;width:49.00px;height:22.20px;background:#f0bf4d;"></div><div class="a" style="left:1562.70px;top:310.20px;width:46.60px;height:22.20px;background:#fdf3dc;border:1px solid #f4cd72;border-right:none"></div><div class="a" style="left:1563.70px;top:311.20px;width:4.50px;height:4.50px;background:#a4c2f4;"></div><span class="t" style="left:1569.30px;top:314.80px;font-size:15px;line-height:15px;color:#303030;letter-spacing:0.052px;font-family:'DejaVu Sans',sans-serif;">go...</span>
<div class="a" style="left:1612.00px;top:321.00px;width:4.00px;height:1.00px;background:#ccc;"></div>
<div class="a" style="left:1616.00px;top:317.00px;width:1.00px;height:8.00px;background:#ccc;"></div>
<div class="a" style="left:1566.70px;top:334.30px;width:9.30px;height:22.00px;background:#f0bf4d;"></div><div class="a" style="left:1566.70px;top:334.30px;width:9.30px;height:22.00px;background:#fdf3dc;border:1px solid #f4cd72"></div><div class="a" style="left:1567.70px;top:335.30px;width:4.50px;height:4.50px;background:#a4c2f4;"></div>
<div class="a" style="left:1566.70px;top:358.00px;width:12.30px;height:22.00px;background:#f0bf4d;"></div><div class="a" style="left:1566.70px;top:358.00px;width:10.80px;height:22.00px;background:#fdf3dc;border:1px solid #f4cd72;border-right:none"></div><div class="a" style="left:1567.70px;top:359.00px;width:4.50px;height:4.50px;background:#a4c2f4;"></div>
<div class="a" style="left:1576.00px;top:381.50px;width:31.30px;height:7.00px;background:#f0bf4d;"></div><div class="a" style="left:1576.00px;top:381.50px;width:28.00px;height:7.00px;background:#fdf3dc;border:1px solid #f4cd72;border-right:none"></div><div class="a" style="left:1577.00px;top:382.50px;width:4.50px;height:4.50px;background:#a4c2f4;"></div>
<div class="a" style="left:1693.30px;top:310.20px;width:119.00px;height:22.20px;background:#f0bf4d;"></div><div class="a" style="left:1693.30px;top:310.20px;width:19.40px;height:22.20px;background:#fdf3dc;border:1px solid #f4cd72;border-right:none"></div><div class="a" style="left:1694.30px;top:311.20px;width:4.50px;height:4.50px;background:#a4c2f4;"></div><span class="t" style="left:1699.00px;top:314.80px;font-size:15px;line-height:15px;color:#303030;letter-spacing:0.039px;font-family:'DejaVu Sans',sans-serif;">modules.15...</span>
<div class="a" style="left:0.00px;top:387.80px;width:1920.00px;height:12.90px;background:#f1f3f4;border-top:1px solid #cdd0d4;border-bottom:1px solid #cdd0d4"></div>
<div class="a" style="left:953.50px;top:392.50px;width:2.60px;height:2.60px;background:#333;border-radius:50%"></div>
<div class="a" style="left:958.70px;top:392.50px;width:2.60px;height:2.60px;background:#333;border-radius:50%"></div>
<div class="a" style="left:963.90px;top:392.50px;width:2.60px;height:2.60px;background:#333;border-radius:50%"></div>
<div class="a" style="left:0.00px;top:400.50px;width:1909.50px;height:168.00px;background:#fff;"></div>
<span class="t" style="left:4.00px;top:405.30px;font-size:15px;line-height:15px;color:#333;letter-spacing:-0.163px;font-family:'DejaVu Sans',sans-serif;">Web Vitals</span>
<div class="a" style="left:0.00px;top:433.50px;width:1909.50px;height:1.20px;background:#e4e5e7;"></div>
<div class="a" style="left:0.00px;top:467.50px;width:1909.50px;height:1.20px;background:#e4e5e7;"></div>
<div class="a" style="left:0.00px;top:501.00px;width:1909.50px;height:1.20px;background:#e4e5e7;"></div>
<div class="a" style="left:0.00px;top:534.50px;width:1909.50px;height:1.20px;background:#e4e5e7;"></div>
<svg style="left:0;top:0" width="1920" height="1080"><line x1="144.3" y1="436.7" x2="144.3" y2="465" stroke="#3fba5c" stroke-width="1.8" stroke-dasharray="4,8"/></svg>
<div class="a" style="left:137.60px;top:444.00px;width:13.40px;height:13.40px;background:#16c65b;border-radius:50%"></div>
<svg style="left:0;top:0" width="1920" height="1080"><line x1="319.3" y1="470.5" x2="319.3" y2="499" stroke="#3fba5c" stroke-width="1.8" stroke-dasharray="4,8"/></svg>
<div class="a" style="left:312.60px;top:477.60px;width:13.40px;height:13.40px;background:#16c65b;border-radius:50%"></div>
<svg style="left:0;top:0" width="1920" height="1080"><line x1="274.3" y1="504" x2="274.3" y2="532.2" stroke="#f4574f" stroke-width="1.8" stroke-dasharray="4,8"/></svg>
<svg style="left:266.3px;top:509.70000000000005px" width="16" height="16" viewBox="0 0 16 16"><path d="M8 .5L15.500 8 8 15.500.5 8z" fill="#f4433c"/></svg>
<svg style="left:0;top:0" width="1920" height="1080"><line x1="312.3" y1="504" x2="312.3" y2="532.2" stroke="#f4574f" stroke-width="1.8" stroke-dasharray="4,8"/></svg>
<svg style="left:304.3px;top:509.70000000000005px" width="16" height="16" viewBox="0 0 16 16"><path d="M8 .5L15.500 8 8 15.500.5 8z" fill="#f4433c"/></svg>
<svg style="left:0;top:0" width="1920" height="1080"><line x1="355.3" y1="504" x2="355.3" y2="532.2" stroke="#f4574f" stroke-width="1.8" stroke-dasharray="4,8"/></svg>
<svg style="left:347.3px;top:509.70000000000005px" width="16" height="16" viewBox="0 0 16 16"><path d="M8 .5L15.500 8 8 15.500.5 8z" fill="#f4433c"/></svg>
<span class="t" style="left:4.70px;top:539.00px;font-size:12.3px;line-height:12.3px;color:#666;letter-spacing:-0.039px;font-family:'DejaVu Sans',sans-serif;">LONG TASKS</span>
<div class="a" style="left:72.70px;top:538.30px;width:18.30px;height:26.70px;background:#3b78e7;border-radius:3px;background:linear-gradient(180deg,rgba(176,204,246,.86) 0,rgba(176,204,246,.86) 55%,#3b78e7 55%)"></div>
<div class="a" style="left:317.30px;top:538.30px;width:38.70px;height:26.70px;background:#3b7ce8;border-radius:3px;background-image:radial-gradient(circle,rgba(255,255,255,.4) .5px,rgba(255,255,255,0) .8px);background-size:3px 3px"></div>
<div class="a" style="left:334.30px;top:538.30px;width:21.70px;height:26.70px;background:#17479e;border-radius:0 3px 3px 0;background:repeating-linear-gradient(135deg,#1c4a96 0,#1c4a96 1.900px,#3a72d6 1.900px,#3a72d6 3.800px)"></div>
<div class="a" style="left:481.70px;top:538.30px;width:49.30px;height:26.70px;background:#3b7ce8;border-radius:3px;background-image:radial-gradient(circle,rgba(255,255,255,.4) .5px,rgba(255,255,255,0) .8px);background-size:3px 3px"></div>
<div class="a" style="left:499.00px;top:538.30px;width:32.00px;height:26.70px;background:#17479e;border-radius:0 3px 3px 0;background:repeating-linear-gradient(135deg,#1c4a96 0,#1c4a96 1.900px,#3a72d6 1.900px,#3a72d6 3.800px)"></div>
<div class="a" style="left:0.00px;top:567.20px;width:1909.50px;height:1.00px;background:#dcdde0;"></div>
<svg style="left:4.5px;top:579.5px" width="11" height="9" viewBox="0 0 11 9"><path d="M0 0h11L5.500 9z" fill="#555"/></svg>
<span class="t" style="left:21.90px;top:577.80px;font-size:15px;line-height:15px;color:#333;letter-spacing:-0.342px;font-family:'DejaVu Sans',sans-serif;">Frames</span>
<div class="a" style="left:133.00px;top:572.00px;width:7.60px;height:24.50px;background:#d3ebc9;"></div>
<span class="t" style="left:153.75px;top:577.60px;font-size:16.3px;line-height:16.3px;color:#222;letter-spacing:-0.777px;font-family:'DejaVu Sans',sans-serif;">275.0 ms</span>
<svg style="left:0;top:0" width="1920" height="600"><path d="M237.5 572h3.2v24.5h-3.2zM256.4 572h4.2v24.5h-4.2zM264.0 572h2.2v24.5h-2.2zM294.9 572h5.5v24.5h-5.5zM301.1 572h3.6v24.5h-3.6zM434.4 572h3.2v24.5h-3.2zM444.6 572h4.8v24.5h-4.8zM476.7 572h2.8v24.5h-2.8zM480.0 572h2.8v24.5h-2.8zM483.3 572h4.8v24.5h-4.8zM504.4 572h3.2v24.5h-3.2zM541.9 572h2.2v24.5h-2.2zM565.3 572h5.5v24.5h-5.5zM571.8 572h3.6v24.5h-3.6zM591.5 572h2.2v24.5h-2.2zM630.0 572h3.2v24.5h-3.2zM633.9 572h5.5v24.5h-5.5zM645.3 572h4.8v24.5h-4.8zM651.1 572h5.5v24.5h-5.5zM663.6 572h5.5v24.5h-5.5zM686.0 572h3.2v24.5h-3.2zM705.0 572h2.2v24.5h-2.2zM734.6 572h3.6v24.5h-3.6zM755.3 572h2.8v24.5h-2.8zM792.0 572h4.8v24.5h-4.8zM797.5 572h5.5v24.5h-5.5zM820.0 572h5.5v24.5h-5.5zM841.4 572h4.2v24.5h-4.2zM851.5 572h5.5v24.5h-5.5zM858.0 572h2.2v24.5h-2.2zM883.3 572h2.2v24.5h-2.2zM917.1 572h4.2v24.5h-4.2zM939.2 572h4.8v24.5h-4.8zM944.7 572h2.2v24.5h-2.2zM957.4 572h3.2v24.5h-3.2zM970.1 572h3.6v24.5h-3.6zM974.7 572h5.5v24.5h-5.5zM1017.5 572h5.5v24.5h-5.5zM1026.4 572h2.2v24.5h-2.2zM1029.3 572h5.5v24.5h-5.5zM1041.7 572h3.6v24.5h-3.6zM1070.9 572h4.2v24.5h-4.2zM1091.1 572h4.8v24.5h-4.8zM1099.7 572h2.8v24.5h-2.8zM1109.0 572h5.5v24.5h-5.5zM1176.1 572h4.8v24.5h-4.8zM1263.2 572h4.2v24.5h-4.2zM1280.4 572h3.6v24.5h-3.6zM1342.0 572h4.8v24.5h-4.8zM1400.3 572h4.2v24.5h-4.2zM1415.2 572h4.2v24.5h-4.2zM1427.9 572h4.8v24.5h-4.8zM1447.3 572h4.2v24.5h-4.2zM1472.3 572h2.2v24.5h-2.2zM1498.5 572h2.2v24.5h-2.2zM1527.6 572h2.2v24.5h-2.2zM1570.3 572h3.2v24.5h-3.2zM1601.9 572h4.2v24.5h-4.2zM1633.1 572h4.8v24.5h-4.8zM1647.3 572h4.8v24.5h-4.8zM1656.1 572h4.2v24.5h-4.2zM1675.2 572h3.2v24.5h-3.2zM1690.3 572h4.2v24.5h-4.2zM1703.5 572h3.2v24.5h-3.2zM1712.9 572h5.5v24.5h-5.5zM1718.9 572h3.2v24.5h-3.2zM1748.9 572h3.6v24.5h-3.6zM1753.0 572h2.8v24.5h-2.8zM1777.5 572h5.5v24.5h-5.5zM1836.8 572h4.8v24.5h-4.8zM1842.3 572h4.2v24.5h-4.2zM1871.6 572h3.2v24.5h-3.2zM1901.7 572h3.2v24.5h-3.2zM1905.4 572h3.6v24.5h-3.6z" fill="#e9f6e3"/><path d="M241.4 572h4.8v24.5h-4.8zM281.2 572h4.2v24.5h-4.2zM291.1 572h2.8v24.5h-2.8zM430.5 572h3.2v24.5h-3.2zM537.8 572h3.6v24.5h-3.6zM544.8 572h2.8v24.5h-2.8zM548.3 572h4.2v24.5h-4.2zM555.7 572h4.2v24.5h-4.2zM560.6 572h4.2v24.5h-4.2zM617.7 572h4.8v24.5h-4.8zM674.5 572h4.8v24.5h-4.8zM701.3 572h3.2v24.5h-3.2zM715.8 572h5.5v24.5h-5.5zM783.0 572h2.2v24.5h-2.2zM786.2 572h4.8v24.5h-4.8zM846.6 572h4.2v24.5h-4.2zM864.5 572h4.8v24.5h-4.8zM878.7 572h3.6v24.5h-3.6zM886.0 572h3.2v24.5h-3.2zM894.9 572h2.2v24.5h-2.2zM930.8 572h3.6v24.5h-3.6zM947.9 572h3.2v24.5h-3.2zM964.6 572h4.8v24.5h-4.8zM1012.8 572h4.2v24.5h-4.2zM1056.5 572h3.2v24.5h-3.2zM1064.0 572h3.2v24.5h-3.2zM1075.6 572h3.2v24.5h-3.2zM1087.3 572h2.8v24.5h-2.8zM1123.3 572h5.5v24.5h-5.5zM1129.5 572h2.2v24.5h-2.2zM1181.6 572h3.2v24.5h-3.2zM1185.3 572h2.2v24.5h-2.2zM1194.0 572h2.8v24.5h-2.8zM1225.4 572h2.8v24.5h-2.8zM1259.4 572h2.8v24.5h-2.8zM1290.5 572h2.8v24.5h-2.8zM1308.8 572h4.2v24.5h-4.2zM1324.5 572h2.2v24.5h-2.2zM1333.6 572h4.2v24.5h-4.2zM1347.5 572h3.2v24.5h-3.2zM1351.4 572h5.5v24.5h-5.5zM1373.4 572h3.2v24.5h-3.2zM1419.9 572h3.6v24.5h-3.6zM1468.5 572h2.8v24.5h-2.8zM1550.9 572h3.2v24.5h-3.2zM1591.1 572h4.8v24.5h-4.8zM1643.2 572h3.6v24.5h-3.6zM1668.2 572h2.8v24.5h-2.8zM1731.2 572h2.8v24.5h-2.8zM1740.5 572h3.6v24.5h-3.6zM1772.8 572h4.2v24.5h-4.2zM1783.5 572h4.2v24.5h-4.2zM1805.6 572h5.5v24.5h-5.5zM1847.5 572h2.8v24.5h-2.8zM1856.5 572h2.2v24.5h-2.2zM1863.8 572h3.6v24.5h-3.6z" fill="#e3f3da"/><path d="M246.7 572h5.5v24.5h-5.5zM252.7 572h3.2v24.5h-3.2zM271.4 572h5.5v24.5h-5.5zM314.9 572h4.2v24.5h-4.2zM488.6 572h3.6v24.5h-3.6zM500.2 572h3.2v24.5h-3.2zM508.6 572h5.5v24.5h-5.5zM524.1 572h5.5v24.5h-5.5zM553.0 572h2.2v24.5h-2.2zM604.2 572h2.8v24.5h-2.8zM607.5 572h2.8v24.5h-2.8zM614.8 572h2.2v24.5h-2.2zM640.4 572h4.2v24.5h-4.2zM711.2 572h3.6v24.5h-3.6zM758.6 572h2.8v24.5h-2.8zM768.1 572h4.2v24.5h-4.2zM778.3 572h4.2v24.5h-4.2zM806.2 572h3.2v24.5h-3.2zM809.9 572h5.5v24.5h-5.5zM816.1 572h3.2v24.5h-3.2zM831.5 572h4.8v24.5h-4.8zM837.3 572h3.6v24.5h-3.6zM873.5 572h4.2v24.5h-4.2zM897.8 572h3.2v24.5h-3.2zM902.0 572h4.2v24.5h-4.2zM912.2 572h4.2v24.5h-4.2zM1007.9 572h4.2v24.5h-4.2zM1046.3 572h4.2v24.5h-4.2zM1115.2 572h3.6v24.5h-3.6zM1132.2 572h4.8v24.5h-4.8zM1138.0 572h2.8v24.5h-2.8zM1221.5 572h3.2v24.5h-3.2zM1242.7 572h2.8v24.5h-2.8zM1268.4 572h4.8v24.5h-4.8zM1284.7 572h4.8v24.5h-4.8zM1305.0 572h2.8v24.5h-2.8zM1357.9 572h4.2v24.5h-4.2zM1362.6 572h4.8v24.5h-4.8zM1458.6 572h5.5v24.5h-5.5zM1480.4 572h2.8v24.5h-2.8zM1586.4 572h4.2v24.5h-4.2zM1613.3 572h2.2v24.5h-2.2zM1638.6 572h3.6v24.5h-3.6zM1652.6 572h2.8v24.5h-2.8zM1664.9 572h2.8v24.5h-2.8zM1671.5 572h3.2v24.5h-3.2zM1679.1 572h3.2v24.5h-3.2zM1707.7 572h4.2v24.5h-4.2zM1744.6 572h3.6v24.5h-3.6zM1823.6 572h5.5v24.5h-5.5zM1829.6 572h2.2v24.5h-2.2zM1892.4 572h5.5v24.5h-5.5z" fill="#dcefd2"/><path d="M261.1 572h2.2v24.5h-2.2zM266.7 572h4.2v24.5h-4.2zM286.4 572h4.2v24.5h-4.2zM372.2 572h2.8v24.5h-2.8zM419.2 572h4.8v24.5h-4.8zM424.7 572h4.8v24.5h-4.8zM438.6 572h2.2v24.5h-2.2zM450.1 572h3.6v24.5h-3.6zM454.2 572h2.8v24.5h-2.8zM462.4 572h5.5v24.5h-5.5zM496.4 572h2.8v24.5h-2.8zM520.9 572h2.2v24.5h-2.2zM530.3 572h3.6v24.5h-3.6zM534.6 572h2.2v24.5h-2.2zM580.6 572h3.2v24.5h-3.2zM584.3 572h2.2v24.5h-2.2zM587.2 572h3.6v24.5h-3.6zM600.0 572h3.2v24.5h-3.2zM657.1 572h5.5v24.5h-5.5zM669.6 572h4.2v24.5h-4.2zM748.0 572h3.6v24.5h-3.6zM860.7 572h2.8v24.5h-2.8zM889.7 572h4.2v24.5h-4.2zM927.5 572h2.8v24.5h-2.8zM961.3 572h2.8v24.5h-2.8zM980.7 572h4.8v24.5h-4.8zM1000.4 572h3.6v24.5h-3.6zM1005.0 572h2.2v24.5h-2.2zM1060.7 572h2.8v24.5h-2.8zM1141.5 572h2.8v24.5h-2.8zM1150.3 572h4.8v24.5h-4.8zM1156.1 572h5.5v24.5h-5.5zM1197.3 572h4.8v24.5h-4.8zM1212.4 572h2.2v24.5h-2.2zM1235.1 572h2.2v24.5h-2.2zM1248.7 572h2.8v24.5h-2.8zM1252.5 572h2.2v24.5h-2.2zM1330.7 572h2.2v24.5h-2.2zM1384.4 572h3.6v24.5h-3.6zM1443.2 572h3.6v24.5h-3.6zM1452.2 572h2.2v24.5h-2.2zM1454.9 572h3.2v24.5h-3.2zM1464.8 572h3.2v24.5h-3.2zM1494.2 572h3.6v24.5h-3.6zM1510.1 572h2.8v24.5h-2.8zM1537.4 572h3.6v24.5h-3.6zM1574.2 572h5.5v24.5h-5.5zM1596.4 572h4.8v24.5h-4.8zM1616.0 572h2.8v24.5h-2.8zM1661.0 572h3.2v24.5h-3.2zM1685.7 572h3.6v24.5h-3.6zM1734.7 572h4.8v24.5h-4.8zM1767.5 572h4.8v24.5h-4.8zM1799.8 572h4.8v24.5h-4.8zM1878.4 572h4.8v24.5h-4.8zM1883.9 572h4.8v24.5h-4.8zM1898.4 572h2.8v24.5h-2.8z" fill="#e5f4dd"/><path d="M277.4 572h2.8v24.5h-2.8zM415.0 572h3.2v24.5h-3.2zM468.9 572h3.2v24.5h-3.2zM472.8 572h3.2v24.5h-3.2zM515.1 572h4.8v24.5h-4.8zM611.0 572h2.8v24.5h-2.8zM695.1 572h5.5v24.5h-5.5zM727.8 572h2.2v24.5h-2.2zM730.5 572h3.6v24.5h-3.6zM738.9 572h5.5v24.5h-5.5zM745.1 572h2.2v24.5h-2.2zM752.6 572h2.2v24.5h-2.2zM762.1 572h5.5v24.5h-5.5zM951.6 572h4.8v24.5h-4.8zM994.3 572h2.2v24.5h-2.2zM1035.5 572h5.5v24.5h-5.5zM1144.8 572h4.8v24.5h-4.8zM1162.6 572h3.2v24.5h-3.2zM1169.6 572h5.5v24.5h-5.5zM1208.9 572h2.8v24.5h-2.8zM1238.0 572h4.2v24.5h-4.2zM1294.3 572h4.2v24.5h-4.2zM1299.2 572h4.8v24.5h-4.8zM1314.0 572h4.2v24.5h-4.2zM1319.2 572h4.8v24.5h-4.8zM1327.2 572h2.8v24.5h-2.8zM1338.8 572h2.2v24.5h-2.2zM1367.9 572h4.8v24.5h-4.8zM1377.3 572h2.8v24.5h-2.8zM1380.6 572h2.8v24.5h-2.8zM1405.2 572h3.2v24.5h-3.2zM1424.2 572h3.2v24.5h-3.2zM1501.2 572h3.6v24.5h-3.6zM1530.8 572h2.2v24.5h-2.2zM1554.6 572h5.5v24.5h-5.5zM1580.2 572h5.5v24.5h-5.5zM1623.4 572h3.2v24.5h-3.2zM1682.8 572h2.2v24.5h-2.2zM1722.8 572h3.6v24.5h-3.6zM1756.3 572h4.2v24.5h-4.2zM1761.0 572h5.5v24.5h-5.5zM1851.0 572h4.8v24.5h-4.8zM1859.2 572h3.6v24.5h-3.6zM1868.1 572h2.8v24.5h-2.8zM1875.5 572h2.2v24.5h-2.2z" fill="#e6f5df"/><path d="M305.7 572h2.2v24.5h-2.2zM320.1 572h2.8v24.5h-2.8zM350.3 572h4.2v24.5h-4.2zM360.1 572h3.6v24.5h-3.6zM378.9 572h4.2v24.5h-4.2zM383.8 572h4.8v24.5h-4.8zM1819.5 572h3.6v24.5h-3.6z" fill="#f7dd96"/><path d="M308.9 572h5.5v24.5h-5.5zM328.6 572h2.2v24.5h-2.2zM341.3 572h3.2v24.5h-3.2zM345.0 572h4.8v24.5h-4.8zM367.9 572h3.6v24.5h-3.6zM1395.6 572h4.2v24.5h-4.2zM1560.8 572h4.8v24.5h-4.8z" fill="#f9e6ad"/><path d="M323.4 572h4.2v24.5h-4.2zM364.7 572h2.2v24.5h-2.2zM375.7 572h2.2v24.5h-2.2zM403.9 572h4.8v24.5h-4.8z" fill="#f8e3a3"/><path d="M331.5 572h4.8v24.5h-4.8zM337.0 572h3.6v24.5h-3.6zM389.6 572h3.6v24.5h-3.6zM399.7 572h3.2v24.5h-3.2zM1388.7 572h2.2v24.5h-2.2zM1566.1 572h3.2v24.5h-3.2z" fill="#fae9b8"/><path d="M355.5 572h3.6v24.5h-3.6zM441.3 572h2.8v24.5h-2.8zM457.7 572h4.2v24.5h-4.2zM492.7 572h3.2v24.5h-3.2zM576.4 572h3.2v24.5h-3.2zM594.2 572h4.8v24.5h-4.8zM623.5 572h5.5v24.5h-5.5zM679.8 572h5.5v24.5h-5.5zM690.2 572h4.2v24.5h-4.2zM707.9 572h2.8v24.5h-2.8zM722.0 572h4.8v24.5h-4.8zM773.0 572h4.8v24.5h-4.8zM803.5 572h2.2v24.5h-2.2zM826.0 572h4.8v24.5h-4.8zM870.3 572h2.2v24.5h-2.2zM906.7 572h4.8v24.5h-4.8zM922.3 572h4.2v24.5h-4.2zM935.1 572h3.6v24.5h-3.6zM986.5 572h3.6v24.5h-3.6zM990.8 572h2.8v24.5h-2.8zM997.2 572h2.2v24.5h-2.2zM1023.5 572h2.2v24.5h-2.2zM1051.2 572h4.8v24.5h-4.8zM1068.2 572h2.2v24.5h-2.2zM1079.5 572h2.2v24.5h-2.2zM1082.7 572h3.6v24.5h-3.6zM1096.4 572h2.8v24.5h-2.8zM1103.2 572h4.8v24.5h-4.8zM1119.8 572h2.8v24.5h-2.8zM1166.3 572h2.8v24.5h-2.8zM1188.5 572h4.8v24.5h-4.8zM1203.1 572h4.8v24.5h-4.8zM1215.1 572h2.8v24.5h-2.8zM1218.6 572h2.2v24.5h-2.2zM1228.9 572h2.8v24.5h-2.8zM1232.2 572h2.2v24.5h-2.2zM1246.0 572h2.2v24.5h-2.2zM1255.2 572h3.2v24.5h-3.2zM1273.9 572h5.5v24.5h-5.5zM1409.4 572h4.8v24.5h-4.8zM1433.7 572h3.6v24.5h-3.6zM1438.3 572h4.2v24.5h-4.2zM1475.5 572h4.2v24.5h-4.2zM1484.2 572h4.2v24.5h-4.2zM1488.9 572h4.8v24.5h-4.8zM1505.5 572h3.6v24.5h-3.6zM1513.6 572h3.6v24.5h-3.6zM1517.7 572h5.5v24.5h-5.5zM1523.7 572h3.2v24.5h-3.2zM1533.7 572h3.2v24.5h-3.2zM1542.0 572h2.2v24.5h-2.2zM1544.9 572h5.5v24.5h-5.5zM1607.1 572h5.5v24.5h-5.5zM1619.5 572h3.2v24.5h-3.2zM1627.6 572h4.8v24.5h-4.8zM1695.2 572h3.2v24.5h-3.2zM1698.9 572h3.6v24.5h-3.6zM1727.1 572h3.6v24.5h-3.6zM1788.7 572h4.8v24.5h-4.8zM1794.0 572h4.8v24.5h-4.8zM1811.6 572h2.2v24.5h-2.2zM1832.5 572h3.6v24.5h-3.6zM1889.2 572h2.2v24.5h-2.2z" fill="#eef8ea"/><path d="M393.7 572h5.5v24.5h-5.5zM409.2 572h4.8v24.5h-4.8zM1391.9 572h3.2v24.5h-3.2zM1814.8 572h4.2v24.5h-4.2z" fill="#f5dc45"/><path d="M305.7 592L313.4 577" stroke="#fff" stroke-width="1.2" opacity=".85" fill="none"/><path d="M322.6 592L339.0 577" stroke="#fff" stroke-width="1.2" opacity=".85" fill="none"/><path d="M340.0 592L354.0 577" stroke="#fff" stroke-width="1.2" opacity=".85" fill="none"/><path d="M360.7 592L371.5 577" stroke="#fff" stroke-width="1.2" opacity=".85" fill="none"/><path d="M377.6 592L385.3 577" stroke="#fff" stroke-width="1.2" opacity=".85" fill="none"/><path d="M392.0 592L400.3 577" stroke="#fff" stroke-width="1.2" opacity=".85" fill="none"/><path d="M407.6 592L414.0 577" stroke="#fff" stroke-width="1.2" opacity=".85" fill="none"/></svg>
<div class="a" style="left:0.00px;top:596.70px;width:1909.50px;height:1.00px;background:#d9dadd;"></div>
<div class="a" style="left:8.60px;top:617.00px;width:1.20px;height:188.00px;background:#dcdcdc;"></div>
<div class="a" style="left:1.00px;top:617.00px;width:1.20px;height:188.00px;background:#e4e4e4;"></div>
<div class="a" style="left:144.50px;top:597.50px;width:93.00px;height:207.50px;background:#b9e0f8;background:linear-gradient(180deg,#fff 0,#fff 20%,#eaf5fd 28%,#c9e7f9 38%,#b9e0f8 46%,#b9e0f8 100%)"></div>
<div class="a" style="left:237.50px;top:597.50px;width:1672.00px;height:207.50px;background:#b9e0f8;background:linear-gradient(180deg,#e2f3d8 0,#e2f3d8 10px,#ffffff 10px,#ffffff 43.500px,#f1f3f4 44px,#f1f3f4 56px,#f2f7fa 57px,#ebf3f8 63px,#e3eff7 66px,#d6eaf6 71px,#c3c9cd 72px,#c3c9cd 77px,#c5e2f4 78px,#c0e1f6 88px,#f3bf98 92px,#f59a50 94px,#f58a38 104px,#f47f28 112px,#f58f42 120px,#f37c26 128px,#db1f35 128.500px,#d81a30 136.500px,#c6dcea 137.500px,#c3dff1 143px,#86b0ca 143.500px,#9fc3d8 145px,#c3dff1 146px,#c3dff1 150px,#f3842a 150.500px,#f5913e 158px,#bfe1f6 159px,#b9e0f8 100%)"></div>
<svg style="left:0;top:0" width="1920" height="810"><defs><pattern id="fr" x="237.5" y="597.5" width="11.56" height="208" patternUnits="userSpaceOnUse"><rect x="0" y="44.200" width="11.600" height="4" fill="#666" opacity=".42"/><rect x=".8" y="44.200" width="2.800" height="4" fill="#2a2a2a" opacity=".85"/><rect x="6.500" y="44.400" width="1.800" height="3.600" fill="#444" opacity=".6"/><rect x="0" y="49.200" width="11.600" height="6" fill="#555" opacity=".45"/><path d="M.4 55.400L2.300 49 4.200 55.400z" fill="#141414" opacity=".92"/><path d="M6.200 55.200L7.400 50 8.600 55.200z" fill="#333" opacity=".65"/><rect x="1.200" y="59.600" width="2.200" height="3.600" rx="1" fill="#3a3a3a" opacity=".8"/><rect x="6.800" y="60" width="1.400" height="3" fill="#555" opacity=".5"/><rect x=".8" y="72.300" width="2.800" height="4.600" fill="#2e2e2e" opacity=".85"/><rect x="6.500" y="72.500" width="1.800" height="4.200" fill="#444" opacity=".55"/><rect x="3.600" y="73.500" width="1" height="2.500" fill="#e8a070" opacity=".8"/><path d="M.8 128.500V93.500L3 85.500 3.800 93.500V128.500z" fill="#f4700f" opacity=".95"/><rect x="6.500" y="93.500" width="1.800" height="35" fill="#f47a20" opacity=".55"/><circle cx="2.600" cy="110" r=".9" fill="#7cb342"/><rect x="1" y="98.500" width="2.400" height="1" fill="#ffd54f" opacity=".8"/><rect x="1.400" y="130.500" width="1.400" height="3.500" fill="#fbe3e6" opacity=".85"/><rect x="3.600" y="0" width="2.200" height="159" fill="#d2d2d2" opacity=".66"/><rect x="3.600" y="159" width="2.200" height="49" fill="#cfd3d6" opacity=".5"/><rect x="8.300" y="0" width="3.260" height="159" fill="#d2d2d2" opacity=".66"/><rect x="8.300" y="159" width="3.260" height="49" fill="#cfd3d6" opacity=".5"/><rect x="6.500" y="0" width="1.800" height="208" fill="#d6d6d6" opacity=".3"/><rect x="0" y="0" width=".8" height="208" fill="#a9a9a9" opacity=".8"/><rect x="5.800" y="0" width=".7" height="208" fill="#bdbdbd" opacity=".7"/><rect x="4.600" y="0" width=".5" height="208" fill="#fafafa" opacity=".8"/><rect x="9.900" y="0" width=".5" height="208" fill="#fafafa" opacity=".8"/><rect x="3.600" y="0" width=".5" height="208" fill="#b5b5b5" opacity=".6"/><rect x="8.300" y="0" width=".5" height="208" fill="#b5b5b5" opacity=".6"/><rect x="11" y="0" width=".5" height="208" fill="#c0c0c0" opacity=".5"/><rect x="0" y="128.500" width="11.560" height="8" fill="#d81a30" opacity=".5"/><rect x="0" y="94" width="11.560" height="34.500" fill="#f5842d" opacity=".32"/><rect x="0" y="150.500" width="11.560" height="7.500" fill="#f5842d" opacity=".35"/><rect x="0" y="44.200" width="11.560" height="11.300" fill="#3a3a3a" opacity=".2"/><rect x="0" y="72.300" width="11.560" height="4.600" fill="#3a3a3a" opacity=".18"/></pattern></defs><rect x="237.5" y="597.5" width="1672.0" height="207.500" fill="url(#fr)"/></svg>
<div class="a" style="left:0.00px;top:805.00px;width:1909.50px;height:1.00px;background:#e3e3e3;"></div>
<div class="a" style="left:0.00px;top:806.00px;width:1909.50px;height:91.00px;background:#fff;"></div>
<div class="a" style="left:169.40px;top:806.00px;width:1.00px;height:91.00px;background:#e6e7e9;"></div>
<div class="a" style="left:342.47px;top:806.00px;width:1.00px;height:91.00px;background:#e6e7e9;"></div>
<div class="a" style="left:515.54px;top:806.00px;width:1.00px;height:91.00px;background:#e6e7e9;"></div>
<div class="a" style="left:688.61px;top:806.00px;width:1.00px;height:91.00px;background:#e6e7e9;"></div>
<div class="a" style="left:861.68px;top:806.00px;width:1.00px;height:91.00px;background:#e6e7e9;"></div>
<div class="a" style="left:1034.75px;top:806.00px;width:1.00px;height:91.00px;background:#e6e7e9;"></div>
<div class="a" style="left:1207.82px;top:806.00px;width:1.00px;height:91.00px;background:#e6e7e9;"></div>
<div class="a" style="left:1380.89px;top:806.00px;width:1.00px;height:91.00px;background:#e6e7e9;"></div>
<div class="a" style="left:1553.96px;top:806.00px;width:1.00px;height:91.00px;background:#e6e7e9;"></div>
<div class="a" style="left:1727.03px;top:806.00px;width:1.00px;height:91.00px;background:#e6e7e9;"></div>
<div class="a" style="left:1900.10px;top:806.00px;width:1.00px;height:91.00px;background:#e6e7e9;"></div>
<div class="a" style="left:0.00px;top:838.30px;width:1909.50px;height:1.00px;background:#eff0f1;"></div>
<div class="a" style="left:0.00px;top:867.30px;width:1909.50px;height:1.00px;background:#eff0f1;"></div>
<svg style="left:6.5px;top:817.5px" width="9" height="11" viewBox="0 0 9 11"><path d="M0 0v11L9 5.500z" fill="#555"/></svg>
<span class="t" style="left:21.70px;top:816.30px;font-size:15px;line-height:15px;color:#333;letter-spacing:-0.097px;font-family:'DejaVu Sans',sans-serif;">Animation</span>
<svg style="left:6.5px;top:847px" width="9" height="11" viewBox="0 0 9 11"><path d="M0 0v11L9 5.500z" fill="#555"/></svg>
<span class="t" style="left:21.70px;top:845.70px;font-size:15px;line-height:15px;color:#333;letter-spacing:-0.027px;font-family:'DejaVu Sans',sans-serif;">Timings</span>
<span class="t" style="left:21.70px;top:874.70px;font-size:15px;line-height:15px;color:#333;letter-spacing:-0.365px;font-family:'DejaVu Sans',sans-serif;">Experience</span>
<div class="a" style="left:236.00px;top:812.70px;width:869.50px;height:23.00px;background:#b9a1e9;"></div>
<svg style="left:0;top:0" width="1920" height="1080"><line x1="143.5" y1="572" x2="143.5" y2="896" stroke="#5a9f68" stroke-width="1.2" stroke-dasharray="10,4"/></svg>
<svg style="left:0;top:0" width="1920" height="1080"><line x1="238.5" y1="572" x2="238.5" y2="896" stroke="#808080" stroke-width="1.2" stroke-dasharray="10,4"/></svg>
<svg style="left:0;top:0" width="1920" height="1080"><line x1="319.5" y1="572" x2="319.5" y2="896" stroke="#222" stroke-width="1" stroke-dasharray="10,4"/></svg>
<svg style="left:0;top:0" width="1920" height="1080"><line x1="356.5" y1="572" x2="356.5" y2="896" stroke="#6fa0ee" stroke-width="1" stroke-dasharray="10,4"/></svg>
<svg style="left:0;top:0" width="1920" height="1080"><line x1="573.5" y1="572" x2="573.5" y2="896" stroke="#dd8a8c" stroke-width="1" stroke-dasharray="10,4"/></svg>
<div class="a" style="left:143.10px;top:842.30px;width:27.50px;height:21.00px;background:#1e8a4a;"></div><span class="t" style="left:149.60px;top:846.00px;font-size:15px;line-height:15px;color:#fff;letter-spacing:-0.512px;font-family:'DejaVu Sans',sans-serif;">FP</span>
<div class="a" style="left:172.90px;top:842.30px;width:39.20px;height:21.00px;background:#12733a;"></div><span class="t" style="left:178.75px;top:846.00px;font-size:15px;line-height:15px;color:#fff;letter-spacing:-0.216px;font-family:'DejaVu Sans',sans-serif;">FCP</span>
<div class="a" style="left:319.00px;top:842.30px;width:39.30px;height:21.00px;background:#1d2824;"></div><span class="t" style="left:324.30px;top:846.00px;font-size:15px;line-height:15px;color:#fff;letter-spacing:0.174px;font-family:'DejaVu Sans',sans-serif;">LCP</span>
<div class="a" style="left:359.30px;top:842.30px;width:42.40px;height:21.00px;background:#1a6dd4;"></div><span class="t" style="left:365.00px;top:846.00px;font-size:15px;line-height:15px;color:#fff;letter-spacing:0.106px;font-family:'DejaVu Sans',sans-serif;">DCL</span>
<div class="a" style="left:572.30px;top:842.30px;width:19.40px;height:21.00px;background:#b3131c;"></div><span class="t" style="left:579.00px;top:846.00px;font-size:15px;line-height:15px;color:#fff;letter-spacing:-1.657px;font-family:'DejaVu Sans',sans-serif;">L</span>
<div class="a" style="left:274.00px;top:871.70px;width:4.70px;height:21.00px;background:#e9605c;"></div>
<div class="a" style="left:311.70px;top:871.70px;width:2.00px;height:21.00px;background:#e9605c;"></div>
<div class="a" style="left:355.00px;top:871.70px;width:1.70px;height:21.00px;background:#e9605c;"></div>
<div class="a" style="left:0.00px;top:896.70px;width:1920.00px;height:39.00px;background:#f1f3f4;border-top:1px solid #cbcdd1;border-bottom:1px solid #cbcdd1"></div>
<span class="t" style="left:9.30px;top:908.70px;font-size:16px;line-height:16px;color:#333;letter-spacing:0.463px;">Summary</span>
<span class="t" style="left:109.30px;top:908.70px;font-size:16px;line-height:16px;color:#5f6368;letter-spacing:0.770px;">Bottom-Up</span>
<span class="t" style="left:221.70px;top:908.70px;font-size:16px;line-height:16px;color:#5f6368;letter-spacing:-0.003px;">Call Tree</span>
<span class="t" style="left:314.00px;top:908.70px;font-size:16px;line-height:16px;color:#5f6368;letter-spacing:0.327px;">Event Log</span>
<div class="a" style="left:0.00px;top:933.30px;width:95.70px;height:2.00px;background:#1a73e8;"></div>
<div class="a" style="left:0.00px;top:936.00px;width:1920.00px;height:121.00px;background:#fff;"></div>
<span class="t" style="left:7.30px;top:950.30px;font-size:17.3px;line-height:17.3px;color:#454545;letter-spacing:0.301px;">Range: 0 – 5.53 s</span>
<span class="t" style="left:258.30px;top:997.70px;font-size:16.5px;line-height:16.5px;color:#454545;letter-spacing:0.153px;">30 ms</span>
<div class="a" style="left:318.30px;top:996.00px;width:17.60px;height:18.00px;background:#8fb3ea;border:1px solid #7da3dc"></div>
<span class="t" style="left:349.00px;top:997.70px;font-size:16.5px;line-height:16.5px;color:#454545;letter-spacing:0.182px;">Loading</span>
<span class="t" style="left:249.30px;top:1032.70px;font-size:16.5px;line-height:16.5px;color:#454545;letter-spacing:0.098px;">720 ms</span>
<div class="a" style="left:318.30px;top:1030.50px;width:17.60px;height:18.00px;background:#f5d07b;border:1px solid #e6bf63"></div>
<span class="t" style="left:349.00px;top:1032.70px;font-size:16.5px;line-height:16.5px;color:#454545;letter-spacing:0.278px;">Scripting</span>
<svg style="left:0;top:1030px" width="200" height="27" viewBox="0 1030 200 27"><circle cx="88.300" cy="1108.500" r="74" fill="#f4f4f4"/><path d="M88.300 1108.500V1034.500A74 74 0 0 1 162.300 1108.500z" fill="#f5d07b"/><rect x="87.600" y="1034.500" width="1.300" height="74" fill="#7aa5e6"/></svg>
<div class="a" style="left:1909.00px;top:936.00px;width:11.00px;height:121.00px;background:#fff;border-left:1px solid #eee"></div>
<div class="a" style="left:1911.70px;top:939.50px;width:8.30px;height:37.00px;background:#c1c3c6;border-radius:4px"></div>
<div class="a" style="left:0.00px;top:1056.70px;width:1920.00px;height:24.00px;background:#f1f3f4;border-top:1px solid #cbcdd1"></div>
<span class="t" style="left:6.00px;top:1070.50px;font-size:16px;line-height:16px;color:#3c3c3c;letter-spacing:0.409px;">Total blocking time: 160.63ms (estimated)</span>
<span class="t" style="left:330.00px;top:1070.50px;font-size:16px;line-height:16px;color:#3c3c3c;letter-spacing:0.318px;">Learn more</span>
<svg style="left:0;top:0;filter:drop-shadow(0 1.200px 1.200px rgba(0,0,0,.35))" width="1920" height="1080"><rect x="45" y="276" width="88.5" height="91" rx="12" fill="#dd0479"/><polygon points="74,366 104.900,366 89.900,403.800" fill="#dd0479"/></svg>
<span class="t" style="left:71.87px;top:289.50px;font-size:64.7px;line-height:64.7px;color:#fff;letter-spacing:0.000px;font-family:'Liberation Sans',sans-serif;font-weight:700;transform:scaleX(1.15);transform-origin:0 0;">1</span>
<div class="a" style="left:73.00px;top:336.10px;width:15.90px;height:9.00px;background:#dd0479;"></div>
<div class="a" style="left:99.75px;top:336.10px;width:14.00px;height:9.00px;background:#dd0479;"></div>
<svg style="left:0;top:0;filter:drop-shadow(0 1.200px 1.200px rgba(0,0,0,.35))" width="1920" height="1080"><rect x="114" y="706.7" width="88.2" height="91.2" rx="12" fill="#dd0479"/><polygon points="141.5,797 172.3,797 156.8,833" fill="#dd0479"/></svg>
<span class="t" style="left:138.35px;top:721.20px;font-size:64.7px;line-height:64.7px;color:#fff;letter-spacing:0.000px;font-family:'Liberation Sans',sans-serif;font-weight:700;transform:scaleX(1.08);transform-origin:0 0;">2</span>
<svg style="left:0;top:0;filter:drop-shadow(0 1.200px 1.200px rgba(0,0,0,.35))" width="1920" height="1080"><rect x="431.9" y="840" width="88.1" height="91.8" rx="12" fill="#dd0479"/><polygon points="433,870.7 433,901.3 393.2,885.8" fill="#dd0479"/></svg>
<span class="t" style="left:456.70px;top:854.90px;font-size:64.7px;line-height:64.7px;color:#fff;letter-spacing:0.000px;font-family:'Liberation Sans',sans-serif;font-weight:700;transform:scaleX(1.08);transform-origin:0 0;">3</span>
</div></body></html>
